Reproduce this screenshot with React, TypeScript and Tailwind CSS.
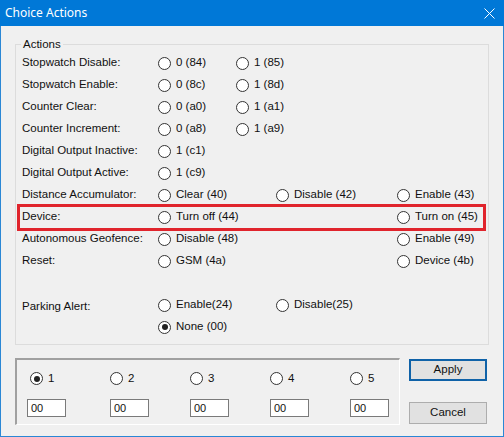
import React from 'react';

type Opt = { col: string; text: string; checked?: boolean };
type Row = { label: string; opts: Opt[]; labelClass?: string };

const rows: (Row | null)[] = [
  { label: 'Stopwatch Disable:', opts: [{ col: 'col-start-2', text: '0 (84)' }, { col: 'col-start-3 col-span-2', text: '1 (85)' }] },
  { label: 'Stopwatch Enable:', opts: [{ col: 'col-start-2', text: '0 (8c)' }, { col: 'col-start-3 col-span-2', text: '1 (8d)' }] },
  { label: 'Counter Clear:', opts: [{ col: 'col-start-2', text: '0 (a0)' }, { col: 'col-start-3 col-span-2', text: '1 (a1)' }] },
  { label: 'Counter Increment:', opts: [{ col: 'col-start-2', text: '0 (a8)' }, { col: 'col-start-3 col-span-2', text: '1 (a9)' }] },
  { label: 'Digital Output Inactive:', opts: [{ col: 'col-start-2', text: '1 (c1)' }] },
  { label: 'Digital Output Active:', opts: [{ col: 'col-start-2', text: '1 (c9)' }] },
  { label: 'Distance Accumulator:', opts: [{ col: 'col-start-2 col-span-2', text: 'Clear (40)' }, { col: 'col-start-4', text: 'Disable (42)' }, { col: 'col-start-5', text: 'Enable (43)' }] },
  { label: 'Device:', opts: [{ col: 'col-start-2 col-span-3', text: 'Turn off (44)' }, { col: 'col-start-5', text: 'Turn on (45)' }] },
  { label: 'Autonomous Geofence:', opts: [{ col: 'col-start-2 col-span-3', text: 'Disable (48)' }, { col: 'col-start-5', text: 'Enable (49)' }] },
  { label: 'Reset:', opts: [{ col: 'col-start-2 col-span-3', text: 'GSM (4a)' }, { col: 'col-start-5', text: 'Device (4b)' }] },
  null,
  { label: 'Parking Alert:', labelClass: 'translate-y-[2px]', opts: [{ col: 'col-start-2 col-span-2', text: 'Enable(24)' }, { col: 'col-start-4', text: 'Disable(25)' }] },
  { label: '', opts: [{ col: 'col-start-2 col-span-2', text: 'None (00)', checked: true }] },
];

const Radio = ({ checked, text }: { checked?: boolean; text: string }) => (
  <span className="flex items-center gap-[5px] whitespace-nowrap">
    <span className="w-[13px] h-[13px] rounded-full border border-[#333] bg-white flex items-center justify-center shrink-0">
      {checked && <span className="w-[6px] h-[6px] rounded-full bg-[#222]" />}
    </span>
    <span>{text}</span>
  </span>
);

export default function App() {
  return (
    <div
      className="w-[504px] h-[437px] bg-[#f0f0f0] border border-t-0 border-[#2a87d5] flex flex-col text-[11.5px] text-[#111]"
      style={{ fontFamily: '"Liberation Sans", Arial, sans-serif' }}
    >
      <div className="h-[26px] bg-[#0078d7] -mx-px flex items-center justify-between pl-[5px] pr-[9px] text-white">
        <span className="text-[12px]" style={{ fontFamily: '"Noto Sans", sans-serif' }}>Choice Actions</span>
        <svg width="11" height="11" viewBox="0 0 11 11" className="mt-[1px]">
          <path d="M0.5 0.5 L10.5 10.5 M10.5 0.5 L0.5 10.5" stroke="white" strokeWidth="1" />
        </svg>
      </div>

      <div className="relative ml-[14px] mt-[18px] w-[474px] h-[301px] border border-[#dcdcdc] pl-[6px] pt-[7px]">
        <span className="absolute left-[5px] top-[-8px] px-[2px] bg-[#f0f0f0] leading-[14px]">Actions</span>
        <div className="grid grid-cols-[136px_78px_40px_121px_1fr] auto-rows-[22px] items-center">
          {rows.map((r, i) =>
            r === null ? (
              <div key={i} className="col-span-5" />
            ) : (
              <React.Fragment key={i}>
                <span className={`col-start-1 whitespace-nowrap ${r.labelClass ?? ''}`}>{r.label}</span>
                {r.opts.map((o, j) => (
                  <span key={j} className={o.col}>
                    <Radio text={o.text} checked={o.checked} />
                  </span>
                ))}
              </React.Fragment>
            )
          )}
        </div>
        <div className="absolute left-[1px] top-[159px] w-[469px] h-[27px] border-[3px] border-[#e0242c]" />
      </div>

      <div className="flex ml-[14px] mt-[13px]">
        <div className="w-[385px] h-[67px] border-t-2 border-l-2 border-[#a0a0a0] border-b border-r border-b-white border-r-white pl-[13px] pt-[10px]">
          <div className="grid grid-cols-[80px_80px_80px_80px_80px] gap-y-[12px]">
            {['1', '2', '3', '4', '5'].map((n, i) => (
              <Radio key={n} text={n} checked={i === 0} />
            ))}
            {['00', '00', '00', '00', '00'].map((v, i) => (
              <div
                key={i}
                className={`w-[39px] h-[18px] bg-white border border-[#7a7a7a] pl-[3px] text-[11px] leading-[16px] ${i === 0 ? '-ml-[3px]' : ''}`}
              >
                {v}
              </div>
            ))}
          </div>
        </div>
        <div className="ml-[9px] mt-[1px] flex flex-col gap-[21px]">
          <button className="w-[78px] h-[22px] bg-[#e1e1e1] border-2 border-[#0f62a8] text-[11.5px]">Apply</button>
          <button className="w-[78px] h-[22px] bg-[#e1e1e1] border border-[#adadad] text-[11.5px]">Cancel</button>
        </div>
      </div>
    </div>
  );
}
